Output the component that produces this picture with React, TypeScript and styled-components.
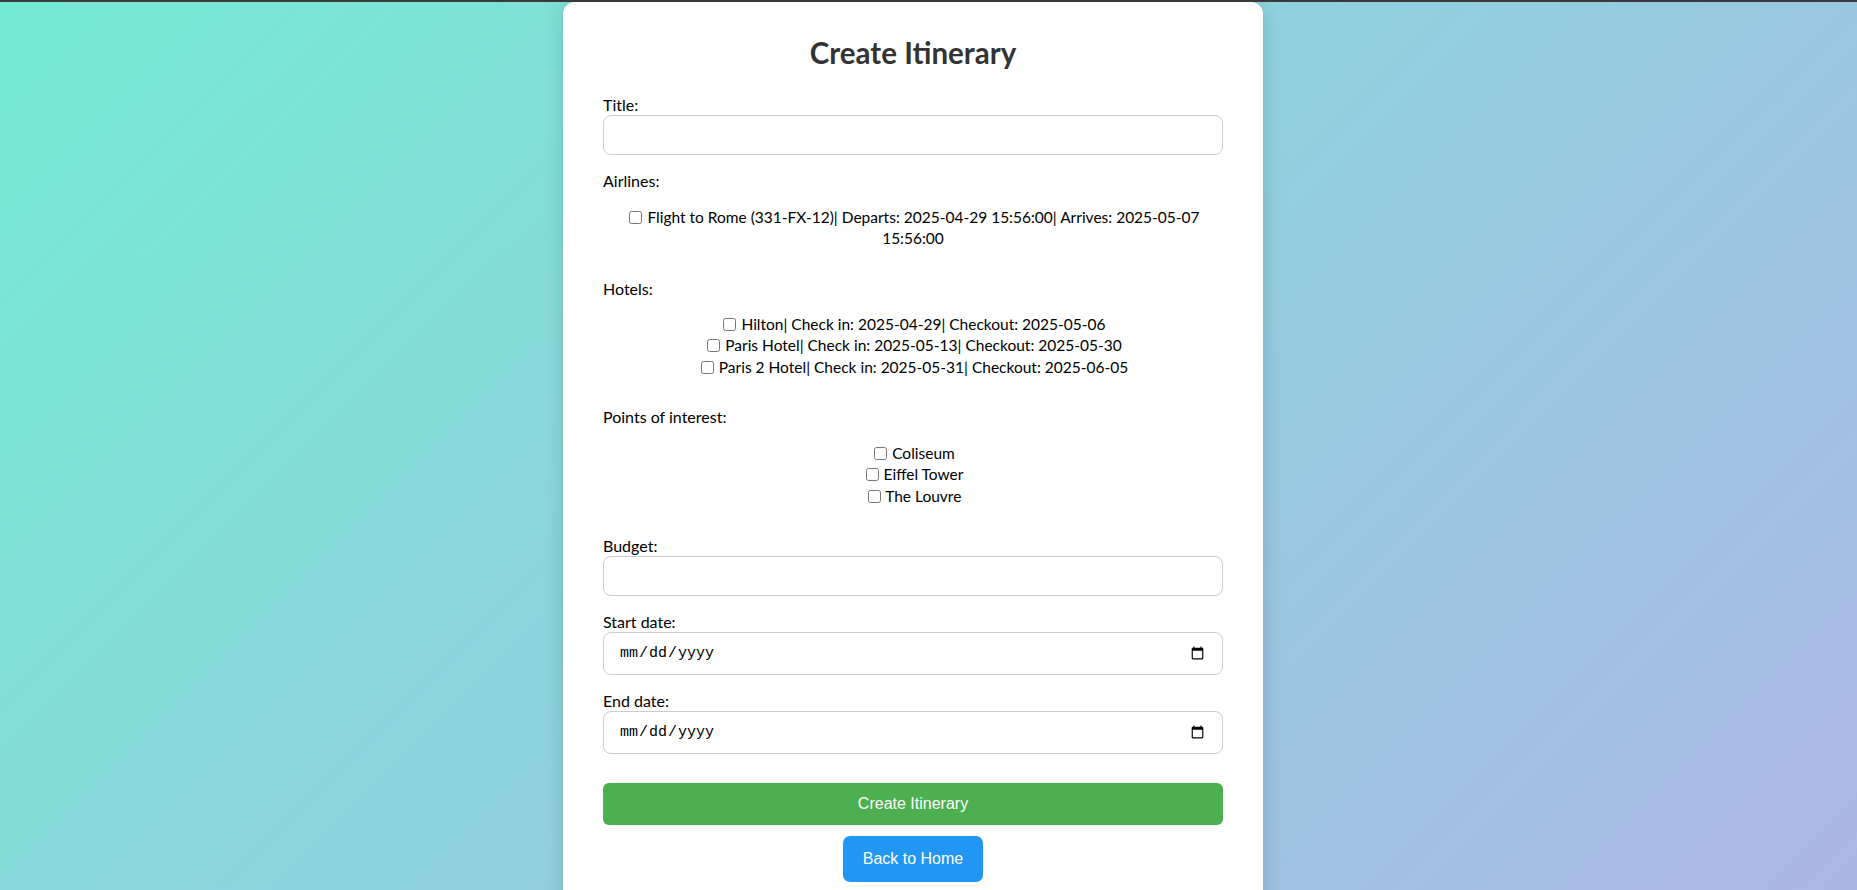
import styled, { createGlobalStyle } from "styled-components";

const GlobalStyle = createGlobalStyle`
  html, body {
    margin: 0;
    padding: 0;
    height: 100%;
    overflow: hidden;
  }
  body {
    font-family: Lato, "Open Sans", sans-serif;
    color: #000;
  }
`;

const Page = styled.div`
  box-sizing: border-box;
  height: 100vh;
  border-top: 2px solid #3a3a3a;
  background: linear-gradient(135deg, #74ebd5 0%, #acb6e5 100%);
  display: flex;
  justify-content: center;
  align-items: flex-start;
  padding-right: 31px;
  overflow: hidden;
`;

const Card = styled.div`
  box-sizing: border-box;
  width: 700px;
  background: #fff;
  border-radius: 12px;
  padding: 32px 40px 40px;
  box-shadow: 0 4px 20px rgba(0, 0, 0, 0.15);
`;

const Heading = styled.h2`
  margin: 0 0 23px;
  font-size: 29.5px;
  line-height: 37px;
  font-weight: 700;
  color: #333;
  text-align: center;
`;

const Group = styled.div`
  margin-bottom: 15px;
`;

const Label = styled.label`
  display: block;
  font-size: 16px;
  line-height: 21px;
`;

const Input = styled.input<{ $date?: boolean }>`
  box-sizing: border-box;
  display: block;
  width: 100%;
  height: ${(p) => (p.$date ? "43px" : "40px")};
  padding: 0 15px;
  border: 1px solid #ccc;
  border-radius: 8px;
  background: #fff;
  font-family: ${(p) => (p.$date ? '"Liberation Mono", monospace' : "inherit")};
  font-size: ${(p) => (p.$date ? "15px" : "16px")};
  color: #000;
  outline: none;
`;

const CheckList = styled.div`
  margin: 15.5px 0 28.5px;
  text-align: center;
  font-size: 15.5px;
  line-height: 21.3px;
`;

const CheckItem = styled.div`
  input {
    margin: 0 1px 0 3px;
    width: 13px;
    height: 13px;
    vertical-align: -1px;
  }
`;

const Button = styled.button<{ $variant: "primary" | "secondary" }>`
  display: block;
  border: none;
  color: #fff;
  font-family: "Liberation Sans", Arial, sans-serif;
  font-size: 16px;
  cursor: pointer;
  ${(p) =>
    p.$variant === "primary"
      ? `
    width: 100%;
    height: 42px;
    margin-top: 29px;
    background: #4caf50;
    border-radius: 6px;
  `
      : `
    height: 46px;
    padding: 0 20px;
    margin: 11px auto 0;
    background: #2196f3;
    border-radius: 7px;
  `}
`;

const airlines = [
  "Flight to Rome (331-FX-12)| Departs: 2025-04-29 15:56:00| Arrives: 2025-05-07 15:56:00",
];

const hotels = [
  "Hilton| Check in: 2025-04-29| Checkout: 2025-05-06",
  "Paris Hotel| Check in: 2025-05-13| Checkout: 2025-05-30",
  "Paris 2 Hotel| Check in: 2025-05-31| Checkout: 2025-06-05",
];

const points = ["Coliseum", "Eiffel Tower", "The Louvre"];

const Checks = ({ items }: { items: string[] }) => (
  <CheckList>
    {items.map((item, i) => (
      <CheckItem key={i}>
        <input type="checkbox" /> {item}
      </CheckItem>
    ))}
  </CheckList>
);

const CreateItinerary = () => {
  return (
    <Page>
      <GlobalStyle />
      <Card>
        <Heading>Create Itinerary</Heading>
        <Group>
          <Label>Title:</Label>
          <Input type="text" />
        </Group>
        <Label>Airlines:</Label>
        <Checks items={airlines} />
        <Label>Hotels:</Label>
        <Checks items={hotels} />
        <Label>Points of interest:</Label>
        <Checks items={points} />
        <Group>
          <Label>Budget:</Label>
          <Input type="text" />
        </Group>
        <Group>
          <Label>Start date:</Label>
          <Input type="date" $date />
        </Group>
        <Group>
          <Label>End date:</Label>
          <Input type="date" $date />
        </Group>
        <Button $variant="primary">Create Itinerary</Button>
        <Button $variant="secondary">Back to Home</Button>
      </Card>
    </Page>
  );
};

export default CreateItinerary;
